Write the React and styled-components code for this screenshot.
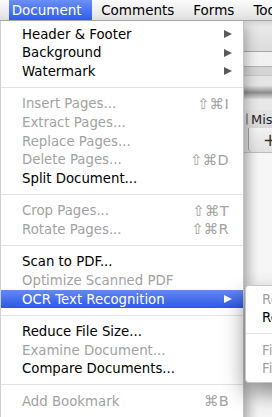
import React from "react";
import styled, { createGlobalStyle } from "styled-components";

const GlobalStyle = createGlobalStyle`
  html, body {
    margin: 0;
    padding: 0;
    overflow: hidden;
    background: #f6f6f6;
  }
  body {
    font-family: "DejaVu Sans", "Liberation Sans", sans-serif;
  }
`;

const ROW = 18.7;
const SEP = 13.6;

const menu = [
  { label: "Header & Footer", sub: true },
  { label: "Background", sub: true },
  { label: "Watermark", sub: true },
  { sep: true },
  { label: "Insert Pages...", key: "⇧⌘I", off: true },
  { label: "Extract Pages...", off: true },
  { label: "Replace Pages...", off: true },
  { label: "Delete Pages...", key: "⇧⌘D", off: true },
  { label: "Split Document..." },
  { sep: true },
  { label: "Crop Pages...", key: "⇧⌘T", off: true },
  { label: "Rotate Pages...", key: "⇧⌘R", off: true },
  { sep: true },
  { label: "Scan to PDF..." },
  { label: "Optimize Scanned PDF", off: true },
  { label: "OCR Text Recognition", sub: true, active: true },
  { sep: true },
  { label: "Reduce File Size..." },
  { label: "Examine Document...", off: true },
  { label: "Compare Documents..." },
  { sep: true },
  { label: "Add Bookmark", key: "⌘B", off: true },
  { sep: true },
];

const ocrMenu = [
  { label: "Recognize Text Using OCR...", off: true },
  { label: "Recognize Text in Multiple Files Using OCR..." },
  { sep: true },
  { label: "Find First OCR Suspect", off: true },
  { label: "Find All OCR Suspects", off: true },
];

const MenuRows = ({ items }) =>
  items.map((item, i) =>
    item.sep ? (
      <Separator key={i} />
    ) : (
      <Row key={i} $off={item.off} $active={item.active}>
        <Label>{item.label}</Label>
        {item.key && <Shortcut>{item.key}</Shortcut>}
        {item.sub && <Arrow $active={item.active} />}
      </Row>
    )
  );

const App = () => (
  <Screen>
    <GlobalStyle />
    <MenuBar>
      <BarItem $active $first>Document</BarItem>
      <BarItem>Comments</BarItem>
      <BarItem>Forms</BarItem>
      <BarItem>Tools</BarItem>
    </MenuBar>
    <Workspace>
      <Backdrop>
        <Toolbar />
        <Band $h={14} $bg="#f2f2f2" $line="#b2b2b2" />
        <Band $h={8} $bg="#d4d4d4" $line="#c4c4c4" />
        <Band $h={10} $bg="#e4e4e4" />
        <Blur />
        <Band $h={11} $bg="#e8e8e8" />
        <TabRow>
          <TabIcon />
          <TabText>Miscellaneous</TabText>
        </TabRow>
        <PlusRow>
          <PlusTab>+</PlusTab>
        </PlusRow>
        <Canvas />
      </Backdrop>

      <Dropdown>
        <MenuRows items={menu} />
      </Dropdown>

      <Submenu>
        <MenuRows items={ocrMenu} />
      </Submenu>
    </Workspace>
  </Screen>
);

const Screen = styled.div`
  width: 272px;
  height: 417px;
  overflow: hidden;
  display: flex;
  flex-direction: column;
`;

const MenuBar = styled.div`
  height: 21px;
  flex: none;
  display: flex;
  align-items: stretch;
  background: linear-gradient(to bottom, #fbfbfb, #ececec 60%, #dedede);
  border-bottom: 1px solid #a4a4a4;
  box-sizing: border-box;
  white-space: nowrap;
`;

const BarItem = styled.div`
  display: flex;
  align-items: center;
  font-size: 13.5px;
  color: ${(p) => (p.$active ? "#fff" : "#000")};
  padding: ${(p) => (p.$first ? "0 10px 1px 2.7px" : "0 9.5px 1px")};
  margin-left: ${(p) => (p.$first ? "9px" : "0")};
  background: ${(p) =>
    p.$active ? "linear-gradient(to bottom, #6a8ff5, #2f5de6)" : "none"};
`;

const Workspace = styled.div`
  position: relative;
  flex: 1;
  overflow: hidden;
`;

const Backdrop = styled.div`
  height: 100%;
  display: flex;
  flex-direction: column;
  padding-left: 244px;
  box-sizing: border-box;
`;

const Toolbar = styled.div`
  height: 30px;
  flex: none;
  background: linear-gradient(to bottom, #d6d6d6, #e9e9e9 20%, #dcdcdc);
  border-bottom: 1px solid #a6a6a6;
`;

const Band = styled.div`
  height: ${(p) => p.$h}px;
  flex: none;
  background: ${(p) => p.$bg};
  border-bottom: ${(p) => (p.$line ? `1px solid ${p.$line}` : "none")};
`;

const Blur = styled.div`
  height: 13px;
  flex: none;
  background: linear-gradient(to bottom, #dcdcdc, #8e8e8e 50%, #dcdcdc);
`;

const TabRow = styled.div`
  height: 18px;
  flex: none;
  display: flex;
  align-items: center;
  gap: 3px;
  background: linear-gradient(to bottom, #e4e4e4, #d8d8d8);
  white-space: nowrap;
`;

const TabIcon = styled.div`
  width: 10px;
  height: 10px;
  margin-left: 2px;
  border: 1px solid #9a9a9a;
  border-radius: 3px;
  background: #efefef;
`;

const TabText = styled.span`
  font-size: 13px;
  color: #222;
`;

const PlusRow = styled.div`
  height: 24px;
  flex: none;
  display: flex;
  align-items: stretch;
  padding-left: 4px;
  background: #d9d9d9;
  border-bottom: 1px solid #bcbcbc;
`;

const PlusTab = styled.div`
  width: 40px;
  display: flex;
  align-items: center;
  padding-left: 14px;
  font-size: 17px;
  color: #333;
  background: linear-gradient(to bottom, #f2f2f2, #e0e0e0);
  border-left: 1px solid #9e9e9e;
  border-radius: 0 0 0 4px;
`;

const Canvas = styled.div`
  flex: 1;
  background: linear-gradient(to right, #e2e2e2, #f6f6f6 14px);
`;

const Dropdown = styled.div`
  position: absolute;
  left: 0;
  top: 0;
  width: 244px;
  padding-top: 3.7px;
  box-sizing: border-box;
  background: #fff;
  border-left: 1px solid #d0d0d0;
  border-right: 1px solid #c4c4c4;
  box-shadow: 2px 4px 12px rgba(0, 0, 0, 0.3);
`;

const Submenu = styled.div`
  position: absolute;
  left: 245px;
  top: 264px;
  width: 300px;
  padding: 3.7px 0;
  background: #fff;
  border: 1px solid #c8c8c8;
  border-radius: 4px 0 0 4px;
  box-shadow: 0 10px 22px rgba(0, 0, 0, 0.45);
`;

const Row = styled.div`
  height: ${ROW}px;
  display: flex;
  align-items: center;
  padding: 0 14px 0 21px;
  font-size: 13.3px;
  white-space: nowrap;
  color: ${(p) => (p.$active ? "#fff" : p.$off ? "#a2a2a2" : "#000")};
  background: ${(p) =>
    p.$active ? "linear-gradient(to bottom, #6489f4, #2c58e4)" : "none"};

  ${Submenu} & {
    padding-left: 16px;
  }
`;

const Label = styled.span`
  flex: 1;
`;

const Shortcut = styled.span`
  font-size: 14.5px;
  letter-spacing: 0.3px;
`;

const Arrow = styled.span`
  width: 0;
  height: 0;
  margin-right: -3px;
  border-left: 8px solid ${(p) => (p.$active ? "#fff" : "#5a5a5a")};
  border-top: 4.5px solid transparent;
  border-bottom: 4.5px solid transparent;
`;

const Separator = styled.div`
  height: ${SEP}px;
  display: flex;
  align-items: center;

  &::after {
    content: "";
    flex: 1;
    height: 1px;
    background: #e2e2e2;
  }
`;

export default App;
